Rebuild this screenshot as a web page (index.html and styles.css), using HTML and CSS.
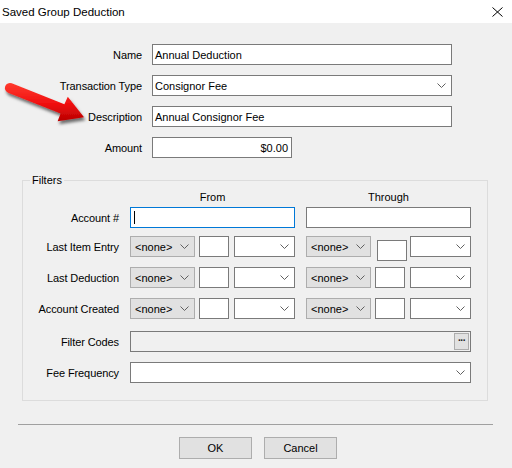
FILE: index.html
```html
<!DOCTYPE html>
<html>
<head>
<meta charset="utf-8">
<title>Saved Group Deduction</title>
<link rel="stylesheet" href="styles.css">
</head>
<body>
<div class="window">
  <div class="titlebar">
    <span class="title">Saved Group Deduction</span>
    <svg class="close" width="11" height="10" viewBox="0 0 11 10"><path d="M0.5 0.5 L10.5 9.5 M10.5 0.5 L0.5 9.5" stroke="#000" stroke-width="1" fill="none"/></svg>
  </div>

  <div class="main-form">
    <label>Name</label>
    <div class="field">Annual Deduction</div>
    <label>Transaction Type</label>
    <div class="field select">Consignor Fee<svg class="chev" width="9" height="5" viewBox="0 0 9 5"><path d="M0.5 0.5 L4.5 4.5 L8.5 0.5" stroke="#606060" fill="none"/></svg></div>
    <label>Description</label>
    <div class="field">Annual Consignor Fee</div>
    <label>Amount</label>
    <div class="field amount">$0.00</div>
  </div>

  <div class="group">
    <span class="legend">Filters</span>
    <div class="filters">
      <span></span>
      <span class="col-head">From</span>
      <span class="col-head">Through</span>

      <label>Account #</label>
      <div class="field focused"><span class="caret"></span></div>
      <div class="field"></div>

      <label>Last Item Entry</label>
      <div class="range">
        <div class="pick">&lt;none&gt;<svg class="chev" width="9" height="5" viewBox="0 0 9 5"><path d="M0.5 0.5 L4.5 4.5 L8.5 0.5" stroke="#606060" fill="none"/></svg></div>
        <div class="field num"></div>
        <div class="field select unit"><svg class="chev" width="9" height="5" viewBox="0 0 9 5"><path d="M0.5 0.5 L4.5 4.5 L8.5 0.5" stroke="#606060" fill="none"/></svg></div>
      </div>
      <div class="range">
        <div class="pick">&lt;none&gt;<svg class="chev" width="9" height="5" viewBox="0 0 9 5"><path d="M0.5 0.5 L4.5 4.5 L8.5 0.5" stroke="#606060" fill="none"/></svg></div>
        <div class="field num shifted"></div>
        <div class="field select unit"><svg class="chev" width="9" height="5" viewBox="0 0 9 5"><path d="M0.5 0.5 L4.5 4.5 L8.5 0.5" stroke="#606060" fill="none"/></svg></div>
      </div>

      <label>Last Deduction</label>
      <div class="range">
        <div class="pick">&lt;none&gt;<svg class="chev" width="9" height="5" viewBox="0 0 9 5"><path d="M0.5 0.5 L4.5 4.5 L8.5 0.5" stroke="#606060" fill="none"/></svg></div>
        <div class="field num"></div>
        <div class="field select unit"><svg class="chev" width="9" height="5" viewBox="0 0 9 5"><path d="M0.5 0.5 L4.5 4.5 L8.5 0.5" stroke="#606060" fill="none"/></svg></div>
      </div>
      <div class="range">
        <div class="pick">&lt;none&gt;<svg class="chev" width="9" height="5" viewBox="0 0 9 5"><path d="M0.5 0.5 L4.5 4.5 L8.5 0.5" stroke="#606060" fill="none"/></svg></div>
        <div class="field num"></div>
        <div class="field select unit"><svg class="chev" width="9" height="5" viewBox="0 0 9 5"><path d="M0.5 0.5 L4.5 4.5 L8.5 0.5" stroke="#606060" fill="none"/></svg></div>
      </div>

      <label>Account Created</label>
      <div class="range">
        <div class="pick">&lt;none&gt;<svg class="chev" width="9" height="5" viewBox="0 0 9 5"><path d="M0.5 0.5 L4.5 4.5 L8.5 0.5" stroke="#606060" fill="none"/></svg></div>
        <div class="field num"></div>
        <div class="field select unit"><svg class="chev" width="9" height="5" viewBox="0 0 9 5"><path d="M0.5 0.5 L4.5 4.5 L8.5 0.5" stroke="#606060" fill="none"/></svg></div>
      </div>
      <div class="range">
        <div class="pick">&lt;none&gt;<svg class="chev" width="9" height="5" viewBox="0 0 9 5"><path d="M0.5 0.5 L4.5 4.5 L8.5 0.5" stroke="#606060" fill="none"/></svg></div>
        <div class="field num"></div>
        <div class="field select unit"><svg class="chev" width="9" height="5" viewBox="0 0 9 5"><path d="M0.5 0.5 L4.5 4.5 L8.5 0.5" stroke="#606060" fill="none"/></svg></div>
      </div>

      <label>Filter Codes</label>
      <div class="field wide readonly"><span class="browse">&middot;&middot;&middot;</span></div>

      <label>Fee Frequency</label>
      <div class="field select wide"><svg class="chev" width="9" height="5" viewBox="0 0 9 5"><path d="M0.5 0.5 L4.5 4.5 L8.5 0.5" stroke="#606060" fill="none"/></svg></div>
    </div>
  </div>

  <div class="separator"></div>

  <div class="buttons">
    <button class="btn">OK</button>
    <button class="btn">Cancel</button>
  </div>

  <!-- callout arrow pointing at the Description label -->
  <svg class="callout" width="512" height="468" viewBox="0 0 512 468">
    <defs>
      <linearGradient id="redFill" x1="0" y1="0" x2="0" y2="1">
        <stop offset="0" stop-color="#ff3a2e"/>
        <stop offset="0.55" stop-color="#f01010"/>
        <stop offset="1" stop-color="#b80000"/>
      </linearGradient>
      <filter id="shade" x="-20%" y="-20%" width="150%" height="160%">
        <feDropShadow dx="1.5" dy="3" stdDeviation="1.8" flood-color="#000" flood-opacity="0.55"/>
      </filter>
    </defs>
    <path d="M11.7 83.3 L64.4 104.2 L67.8 96.7 L84 117.2 L57.6 121.3 L60.6 113.6 L8.1 92.7 A4.8 4.8 0 0 1 11.7 83.3 Z" fill="url(#redFill)" filter="url(#shade)"/>
  </svg>
</div>
</body>
</html>
```

FILE: styles.css
```css
* {
  box-sizing: border-box;
}

body {
  margin: 0;
  background: #f0f0f0;
  font-family: "Liberation Sans", Arial, sans-serif;
  font-size: 11px;
  color: #000;
}

.window {
  position: relative;
  width: 512px;
  height: 468px;
  overflow: hidden;
}

/* title bar */
.titlebar {
  height: 23px;
  background: #fff;
  display: flex;
  align-items: center;
  justify-content: space-between;
  padding: 0 9px 0 2px;
  font-size: 11.5px;
}

.close {
  display: block;
}

/* top form */
.main-form {
  display: grid;
  grid-template-columns: 142px 300px;
  grid-auto-rows: 21px;
  column-gap: 10px;
  row-gap: 10px;
  padding-top: 21px;
}

label {
  display: flex;
  align-items: center;
  justify-content: flex-end;
  height: 21px;
  white-space: nowrap;
  letter-spacing: -0.1px;
}

.field {
  height: 21px;
  border: 1px solid #7a7a7a;
  background: #fff;
  display: flex;
  align-items: center;
  padding: 0 2px;
  white-space: nowrap;
}

.field.select {
  justify-content: space-between;
  padding-right: 5px;
}

.chev {
  display: block;
  flex: none;
  margin-left: auto;
}

.field.amount {
  width: 140px;
  justify-content: flex-end;
  padding-right: 3px;
}

/* filters group */
.group {
  position: relative;
  margin: 22px 0 0 22px;
  width: 466px;
  border: 1px solid #dcdcdc;
  padding-bottom: 17px;
}

.legend {
  position: absolute;
  top: -8px;
  left: 7px;
  padding: 0 2px;
  background: #f0f0f0;
  line-height: 14px;
}

.filters {
  display: grid;
  grid-template-columns: 96px 165px 165px;
  grid-template-rows: 26px 29px 31px 31px 33px 31px 21px;
  column-gap: 11px;
  align-items: start;
}

.col-head {
  align-self: end;
  margin-bottom: 3px;
  text-align: center;
  line-height: 14px;
}

.field.focused {
  border-color: #0078d7;
}

.caret {
  width: 1px;
  height: 13px;
  margin-left: 1px;
  background: #000;
}

.range {
  display: flex;
  align-items: flex-start;
}

.pick {
  width: 65px;
  height: 21px;
  background: #e1e1e1;
  border: 1px solid #adadad;
  display: flex;
  align-items: center;
  padding: 0 5px 0 4px;
  margin-right: 4px;
}

.field.num {
  width: 30px;
  margin-right: 5px;
}

.field.num.shifted {
  margin: 4px 3px 0 2px;
}

.field.unit {
  width: 61px;
}

.field.wide {
  grid-column: 2 / 4;
}

.field.readonly {
  background: #f0f0f0;
  justify-content: flex-end;
  padding-right: 1px;
}

.browse {
  width: 15px;
  height: 17px;
  background: #e1e1e1;
  border: 1px solid #adadad;
  font-size: 10px;
  font-weight: bold;
  line-height: 13px;
  text-align: center;
  letter-spacing: -1px;
  color: #222;
}

/* footer */
.separator {
  margin: 23px 0 0 18px;
  width: 475px;
  height: 1px;
  background: #a0a0a0;
}

.buttons {
  display: flex;
  justify-content: center;
  gap: 12px;
  padding-left: 4px;
  margin-top: 12px;
}

.btn {
  width: 73px;
  height: 22px;
  background: #e1e1e1;
  border: 1px solid #adadad;
  font-family: inherit;
  font-size: 11px;
  color: #000;
  padding: 0;
}

.callout {
  position: absolute;
  left: 0;
  top: 0;
  pointer-events: none;
}
```
